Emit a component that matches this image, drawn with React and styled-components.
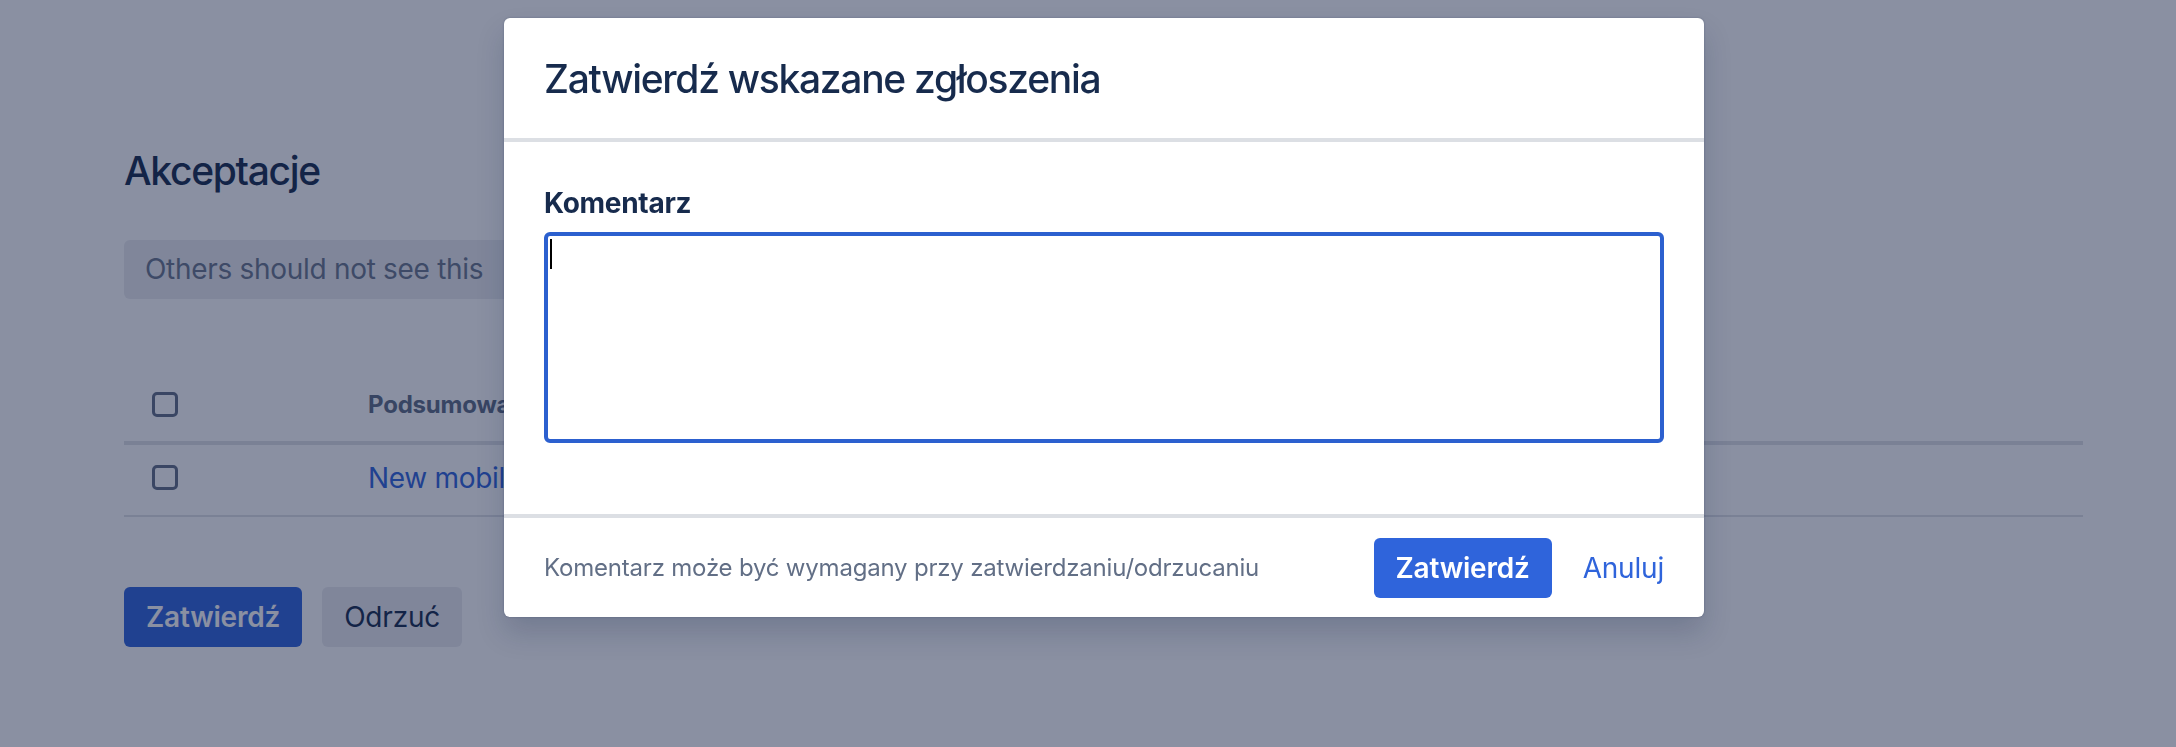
import React from "react";
import styled, { createGlobalStyle } from "styled-components";

const GlobalStyle = createGlobalStyle`
  html, body {
    margin: 0;
    height: 100%;
    overflow: hidden;
    background: #ffffff;
  }
  body {
    font-family: Inter, "Noto Sans", "Liberation Sans", sans-serif;
    color: #172b4d;
  }
  * {
    box-sizing: border-box;
  }
`;

const Page = styled.div`
  padding: 147px 93px 0 124px;
`;

const Heading = styled.h1`
  margin: 0;
  font-size: 39px;
  line-height: 48px;
  letter-spacing: -1.3px;
  font-weight: 500;
  color: #172b4d;
`;

const Notice = styled.div`
  margin-top: 45px;
  width: 520px;
  height: 59px;
  padding: 0 21px;
  border-radius: 6px;
  background: #ebecf0;
  font-size: 28px;
  line-height: 59px;
  letter-spacing: -0.3px;
  color: #6b778c;
`;

const Table = styled.div`
  margin-top: 68px;
`;

const Row = styled.div`
  display: grid;
  grid-template-columns: 244px 1fr;
  align-items: center;
  height: ${(p) => (p.head ? "78px" : "72px")};
  padding-bottom: ${(p) => (p.head ? "0" : "5px")};
  border-bottom: ${(p) => (p.head ? "4px" : "2px")} solid #dfe1e6;
`;

const CheckCell = styled.div`
  padding-left: 28px;
  display: flex;
  align-items: center;
`;

const Checkbox = styled.span`
  display: block;
  width: 26px;
  height: 25px;
  border: 3px solid #626f86;
  border-radius: 5px;
  background: #ffffff;
`;

const HeadText = styled.div`
  font-size: 24px;
  font-weight: 700;
  letter-spacing: -0.2px;
  color: #5e6c84;
`;

const LinkText = styled.a`
  font-size: 28px;
  letter-spacing: -0.3px;
  color: #2f64db;
  text-decoration: none;
`;

const Actions = styled.div`
  display: flex;
  gap: 20px;
  margin-top: 70px;
`;

const Button = styled.button`
  height: 60px;
  padding: 0 22px;
  border: none;
  border-radius: 6px;
  font-family: inherit;
  font-size: 28px;
  letter-spacing: -0.2px;
  font-weight: ${(p) => (p.primary ? 600 : 400)};
  background: ${(p) => (p.primary ? "#2f64db" : "#ebecf0")};
  color: ${(p) => (p.primary ? "#ffffff" : "#172b4d")};
  cursor: pointer;
`;

const Overlay = styled.div`
  position: fixed;
  inset: 0;
  background: rgba(16, 29, 65, 0.49);
  display: flex;
  justify-content: center;
  align-items: flex-start;
  padding: 18px 0 0 32px;
`;

const Dialog = styled.div`
  width: 1200px;
  background: #ffffff;
  border-radius: 6px;
  box-shadow: 0 16px 28px rgba(9, 30, 66, 0.18), 0 0 2px rgba(9, 30, 66, 0.31);
  overflow: hidden;
`;

const DialogHeader = styled.div`
  height: 124px;
  padding: 0 40px;
  display: flex;
  align-items: center;
  border-bottom: 4px solid #dcdfe4;
`;

const DialogTitle = styled.h2`
  margin: 0;
  font-size: 39px;
  letter-spacing: -1.3px;
  font-weight: 500;
  color: #172b4d;
`;

const DialogBody = styled.div`
  padding: 45px 40px 71px;
`;

const Label = styled.label`
  display: block;
  font-size: 28px;
  line-height: 32px;
  letter-spacing: -0.3px;
  font-weight: 700;
  color: #172b4d;
`;

const Field = styled.div`
  position: relative;
  margin-top: 13px;
`;

const TextArea = styled.textarea`
  display: block;
  width: 100%;
  height: 211px;
  border: 4px solid #2c60cf;
  border-radius: 6px;
  outline: none;
  resize: none;
  padding: 8px 12px;
  font-family: inherit;
  font-size: 28px;
  caret-color: transparent;
`;

const Caret = styled.span`
  position: absolute;
  left: 6px;
  top: 7px;
  width: 2px;
  height: 30px;
  background: #000000;
`;

const DialogFooter = styled.div`
  height: 103px;
  padding: 0 40px;
  display: flex;
  align-items: center;
  border-top: 4px solid #dcdfe4;
`;

const Hint = styled.div`
  flex: 1;
  font-size: 24px;
  letter-spacing: -0.2px;
  color: #626f86;
`;

const CancelLink = styled.a`
  margin-left: 31px;
  font-size: 28px;
  letter-spacing: -0.2px;
  color: #2f64db;
  text-decoration: none;
  cursor: pointer;
`;

export default function App() {
  return (
    <>
      <GlobalStyle />
      <Page>
        <Heading>Akceptacje</Heading>
        <Notice>Others should not see this</Notice>
        <Table>
          <Row head>
            <CheckCell>
              <Checkbox />
            </CheckCell>
            <HeadText>Podsumowanie</HeadText>
          </Row>
          <Row>
            <CheckCell>
              <Checkbox />
            </CheckCell>
            <LinkText href="#">New mobile phone</LinkText>
          </Row>
        </Table>
        <Actions>
          <Button primary>Zatwierdź</Button>
          <Button>Odrzuć</Button>
        </Actions>
      </Page>
      <Overlay>
        <Dialog role="dialog">
          <DialogHeader>
            <DialogTitle>Zatwierdź wskazane zgłoszenia</DialogTitle>
          </DialogHeader>
          <DialogBody>
            <Label htmlFor="comment">Komentarz</Label>
            <Field>
              <TextArea id="comment" />
              <Caret />
            </Field>
          </DialogBody>
          <DialogFooter>
            <Hint>Komentarz może być wymagany przy zatwierdzaniu/odrzucaniu</Hint>
            <Button primary>Zatwierdź</Button>
            <CancelLink>Anuluj</CancelLink>
          </DialogFooter>
        </Dialog>
      </Overlay>
    </>
  );
}
